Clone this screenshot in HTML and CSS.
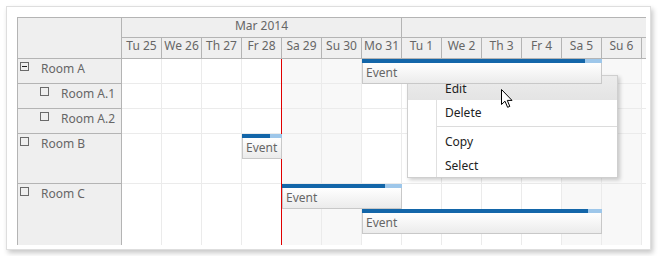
FILE: index.html
```html
<!DOCTYPE html>
<html lang="en">
<head>
    <meta charset="UTF-8">
    <title>Scheduler - context menu</title>
    <link rel="stylesheet" href="styles.css">
</head>
<body>
    <!-- scheduler box -->
    <div class="card">
        <div class="scheduler">
            <!-- resources on the left -->
            <div class="rowheaders">
                <div class="corner"></div>
                <div class="rh"><span class="tree minus"></span><span>Room A</span></div>
                <div class="rh child"><span class="tree"></span><span>Room A.1</span></div>
                <div class="rh child"><span class="tree"></span><span>Room A.2</span></div>
                <div class="rh tall"><span class="tree"></span><span>Room B</span></div>
                <div class="rh last"><span class="tree"></span><span>Room C</span></div>
            </div>

            <!-- time header + grid -->
            <div class="timeline">
                <div class="months">
                    <div class="month">Mar 2014</div>
                    <div class="month next"></div>
                </div>
                <div class="days">
                    <div class="day">Tu 25</div>
                    <div class="day">We 26</div>
                    <div class="day">Th 27</div>
                    <div class="day">Fr 28</div>
                    <div class="day">Sa 29</div>
                    <div class="day">Su 30</div>
                    <div class="day">Mo 31</div>
                    <div class="day">Tu 1</div>
                    <div class="day">We 2</div>
                    <div class="day">Th 3</div>
                    <div class="day">Fr 4</div>
                    <div class="day">Sa 5</div>
                    <div class="day">Su 6</div>
                    <div class="day"></div>
                </div>

                <div class="body">
                    <div class="separator"></div>

                    <!-- Room A -->
                    <div class="row">
                        <div class="cells">
                            <i class="cell"></i><i class="cell"></i><i class="cell"></i><i class="cell"></i><i class="cell we"></i><i class="cell we"></i><i class="cell"></i>
                            <i class="cell"></i><i class="cell"></i><i class="cell"></i><i class="cell"></i><i class="cell we"></i><i class="cell we"></i><i class="cell"></i>
                        </div>
                        <div class="event" style="grid-row: 1; grid-column: 7 / span 6;">
                            <div class="bar"><div class="done" style="width: 93%;"></div></div>
                            <div class="box">Event</div>
                        </div>
                    </div>

                    <!-- Room A.1 -->
                    <div class="row">
                        <div class="cells">
                            <i class="cell"></i><i class="cell"></i><i class="cell"></i><i class="cell"></i><i class="cell we"></i><i class="cell we"></i><i class="cell"></i>
                            <i class="cell"></i><i class="cell"></i><i class="cell"></i><i class="cell"></i><i class="cell we"></i><i class="cell we"></i><i class="cell"></i>
                        </div>
                    </div>

                    <!-- Room A.2 -->
                    <div class="row">
                        <div class="cells">
                            <i class="cell"></i><i class="cell"></i><i class="cell"></i><i class="cell"></i><i class="cell we"></i><i class="cell we"></i><i class="cell"></i>
                            <i class="cell"></i><i class="cell"></i><i class="cell"></i><i class="cell"></i><i class="cell we"></i><i class="cell we"></i><i class="cell"></i>
                        </div>
                    </div>

                    <!-- Room B -->
                    <div class="row tall">
                        <div class="cells">
                            <i class="cell"></i><i class="cell"></i><i class="cell"></i><i class="cell"></i><i class="cell we"></i><i class="cell we"></i><i class="cell"></i>
                            <i class="cell"></i><i class="cell"></i><i class="cell"></i><i class="cell"></i><i class="cell we"></i><i class="cell we"></i><i class="cell"></i>
                        </div>
                        <div class="event" style="grid-row: 1; grid-column: 4 / span 1;">
                            <div class="bar"><div class="done" style="width: 70%;"></div></div>
                            <div class="box">Event</div>
                        </div>
                    </div>

                    <!-- Room C -->
                    <div class="row last">
                        <div class="cells">
                            <i class="cell"></i><i class="cell"></i><i class="cell"></i><i class="cell"></i><i class="cell we"></i><i class="cell we"></i><i class="cell"></i>
                            <i class="cell"></i><i class="cell"></i><i class="cell"></i><i class="cell"></i><i class="cell we"></i><i class="cell we"></i><i class="cell"></i>
                        </div>
                        <div class="event" style="grid-row: 1; grid-column: 5 / span 3;">
                            <div class="bar"><div class="done" style="width: 86%;"></div></div>
                            <div class="box">Event</div>
                        </div>
                        <div class="event" style="grid-row: 2; grid-column: 7 / span 6;">
                            <div class="bar"><div class="done" style="width: 94%;"></div></div>
                            <div class="box">Event</div>
                        </div>
                    </div>
                </div>
            </div>
        </div>
    </div>

    <!-- event context menu -->
    <div class="menu">
        <div class="item hover">Edit</div>
        <div class="item">Delete</div>
        <div class="sep"></div>
        <div class="item">Copy</div>
        <div class="item">Select</div>
    </div>

    <!-- mouse pointer -->
    <svg class="cursor" width="13" height="20" viewBox="0 0 13 20">
        <path d="M0.5 0.5 L0.5 15.5 L4 12.2 L6.6 18.3 L8.8 17.4 L6.3 11.4 L11 11.4 Z" fill="#fff" stroke="#000" stroke-width="1" stroke-linejoin="round"/>
    </svg>
</body>
</html>
```

FILE: styles.css
```css
/* page */
body {
    margin: 0;
    padding: 6px;
    background: #fff;
    font-family: "Noto Sans", "Open Sans", sans-serif;
    font-size: 12px;
    color: #666;
}

/* white box with shadow */
.card {
    width: 629px;
    padding: 10px 4px 4px 10px;
    border: 1px solid #dedede;
    box-shadow: 2px 3px 5px rgba(0, 0, 0, 0.22);
}

.scheduler {
    display: flex;
    width: 629px;
    height: 228px;
    box-sizing: border-box;
    border-top: 1px solid #b4b4b4;
    border-left: 1px solid #b4b4b4;
    overflow: hidden;
}

/* resource column */
.rowheaders {
    flex: none;
    width: 104px;
    box-sizing: border-box;
    display: flex;
    flex-direction: column;
    background: #efefef;
    border-right: 1px solid #b4b4b4;
}

.corner {
    flex: none;
    height: 41px;
    box-sizing: border-box;
    border-bottom: 1px solid #b4b4b4;
}

.rh {
    flex: none;
    height: 25px;
    box-sizing: border-box;
    display: flex;
    align-items: flex-start;
    gap: 12px;
    padding: 3px 0 0 2px;
    line-height: 14px;
    border-bottom: 1px solid #b4b4b4;
}

.rh.child {
    padding-left: 22px;
}

.rh.tall {
    height: 50px;
}

.rh.last {
    flex: 1;
    border-bottom: none;
}

/* expand / collapse square */
.tree {
    flex: none;
    width: 9px;
    height: 9px;
    box-sizing: border-box;
    border: 1px solid #6a6a6a;
    display: flex;
    align-items: center;
    justify-content: center;
}

.tree.minus::after {
    content: "";
    width: 5px;
    height: 1px;
    background: #222;
}

/* time header */
.timeline {
    flex: 1;
    min-width: 0;
    display: flex;
    flex-direction: column;
    overflow: hidden;
}

.months,
.days {
    flex: none;
    display: flex;
    box-sizing: border-box;
    background: #efefef;
    border-bottom: 1px solid #b4b4b4;
    line-height: 16px;
}

.months {
    height: 20px;
}

.days {
    height: 21px;
}

.month {
    flex: none;
    width: 280px;
    box-sizing: border-box;
    border-right: 1px solid #b4b4b4;
    text-align: center;
}

.month.next {
    width: 1200px;
}

.day {
    flex: none;
    width: 40px;
    box-sizing: border-box;
    border-right: 1px solid #b4b4b4;
    text-align: center;
    white-space: nowrap;
}

/* grid */
.body {
    flex: 1;
    position: relative;
    display: flex;
    flex-direction: column;
}

.row {
    flex: none;
    display: grid;
    grid-template-columns: repeat(14, 40px);
    grid-template-rows: 25px;
}

.row.tall {
    grid-template-rows: 25px 25px;
}

.row.last {
    flex: 1;
    grid-template-rows: 25px 25px 1fr;
}

.cells {
    grid-column: 1 / -1;
    grid-row: 1 / -1;
    display: flex;
}

.cell {
    flex: none;
    width: 40px;
    box-sizing: border-box;
    border-right: 1px solid #ebebeb;
    border-bottom: 1px solid #ebebeb;
}

.row.last .cell {
    border-bottom: none;
}

.cell.we {
    background: #f8f8f8;
}

/* current time line */
.separator {
    position: absolute;
    top: 0;
    bottom: 0;
    left: 159px;
    width: 1px;
    background: #e00000;
    z-index: 0;
}

/* events */
.event {
    position: relative;
    z-index: 1;
    display: flex;
    flex-direction: column;
    min-width: 0;
}

.bar {
    flex: none;
    height: 4px;
    background: #9ec7ea;
}

.done {
    height: 100%;
    background: #1366a9;
}

.box {
    flex: 1;
    box-sizing: border-box;
    padding: 3px 0 0 3px;
    line-height: 14px;
    border: 1px solid #c8c8c8;
    border-top: none;
    background: linear-gradient(#ffffff, #ebebeb);
    color: #666;
}

/* context menu */
.menu {
    position: absolute;
    left: 407px;
    top: 75px;
    width: 209px;
    border: 1px solid #cfcfcf;
    background: linear-gradient(to right, #fff 28px, #e0e0e0 28px, #e0e0e0 29px, #fff 29px);
    box-shadow: 2px 2px 4px rgba(0, 0, 0, 0.2);
    color: #222;
}

.item {
    height: 24px;
    box-sizing: border-box;
    padding: 1px 0 0 37px;
    line-height: 24px;
}

.item.hover {
    background: linear-gradient(#ececec, #e4e4e4);
}

.sep {
    height: 1px;
    margin: 2px 0 2px 29px;
    background: #dcdcdc;
}

.cursor {
    position: absolute;
    left: 501px;
    top: 89px;
}
```
